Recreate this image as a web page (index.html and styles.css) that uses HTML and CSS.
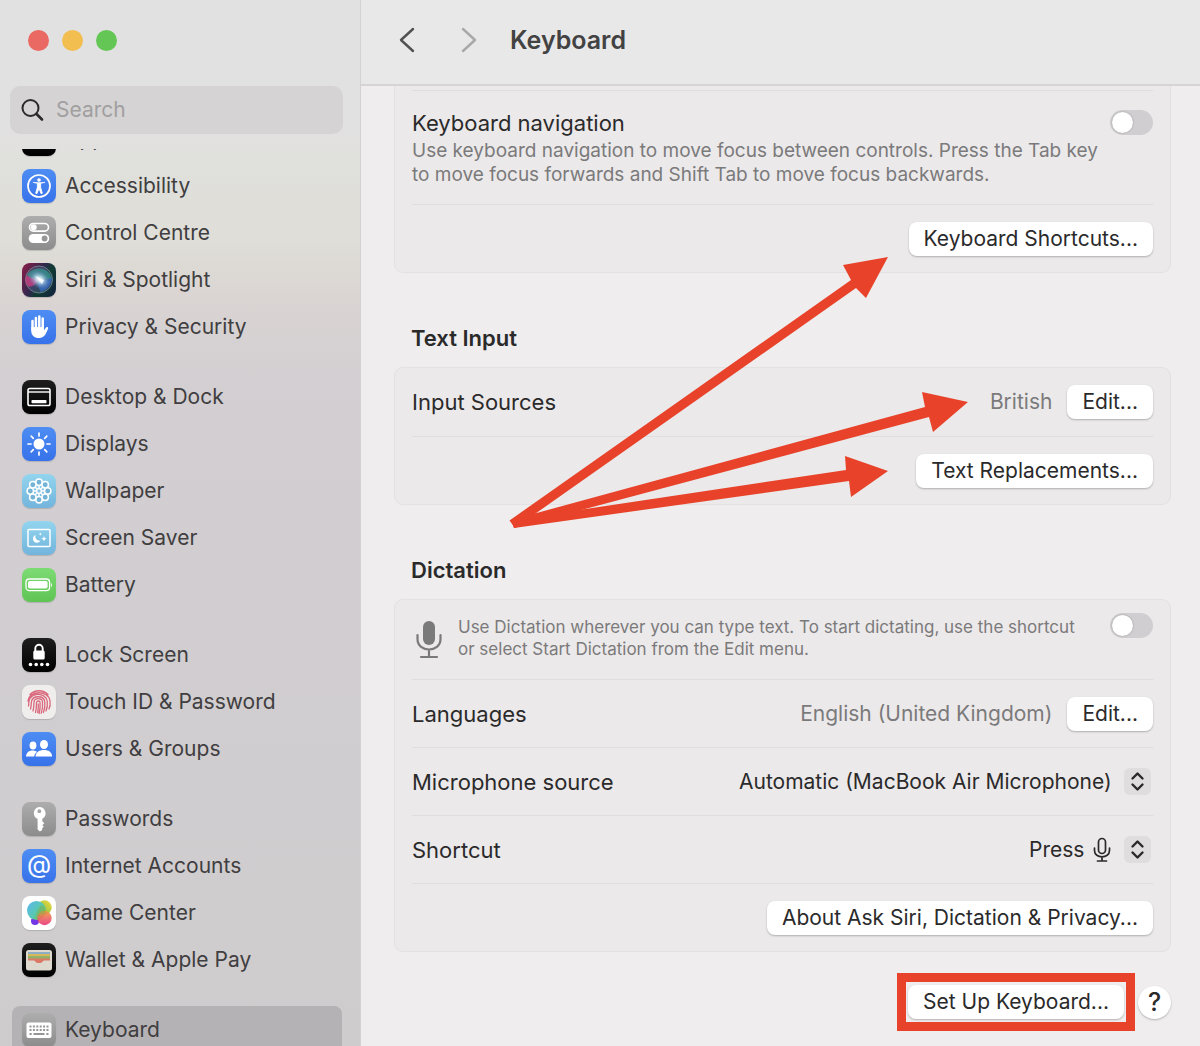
FILE: index.html
```html
<!DOCTYPE html>
<html lang="en">
<head>
    <meta charset="UTF-8">
    <meta name="viewport" content="width=device-width, initial-scale=1.0">
    <title>Keyboard</title>
    <link rel="stylesheet" href="styles.css">
</head>
<body>
<div class="window">

    <aside class="sidebar">
        <div class="lights">
            <button class="light red" aria-label="Close"></button>
            <button class="light yellow" aria-label="Minimise"></button>
            <button class="light green" aria-label="Zoom"></button>
        </div>

        <label class="search">
            <svg width="24" height="24" viewBox="0 0 24 24" fill="none" stroke="#2b2a2b" stroke-linecap="round"><circle cx="9.5" cy="10" r="8" stroke-width="2"/><path d="M15.500 16l5.500 5.500" stroke-width="2.6"/></svg>
            <input type="search" placeholder="Search" aria-label="Search">
        </label>

        <nav class="list">
            <div class="group">
                <a class="item" href="#"><span class="icon black"></span>Appearance</a>
                <a class="item" href="#"><span class="icon blue"><svg viewBox="0 0 34 34"><circle cx="17" cy="17" r="11" fill="none" stroke="#fff" stroke-width="1.7"/><circle cx="17" cy="11" r="1.8" fill="#fff"/><path d="M11 13.3l4.400 1v4l-1.700 6 1.200.4L17 19.500l2.100 5.200 1.200-.4-1.700-6v-4l4.400-1" fill="#fff" stroke="#fff" stroke-width=".9" stroke-linejoin="round"/></svg></span>Accessibility</a>
                <a class="item" href="#"><span class="icon grey"><svg viewBox="0 0 34 34"><rect x="7.5" y="7.500" width="19" height="7.6" rx="3.8" fill="none" stroke="#fff" stroke-width="1.6"/><circle cx="11.7" cy="11.300" r="3" fill="#fff"/><rect x="6.7" y="18" width="20.6" height="9" rx="4.5" fill="#fff"/><circle cx="22.6" cy="22.5" r="2.9" fill="#979697"/></svg></span>Control Centre</a>
                <a class="item" href="#"><span class="icon siri"><svg viewBox="0 0 34 34"><defs><radialGradient id="glow"><stop offset="0" stop-color="#fff"/><stop offset=".35" stop-color="#c5e3f2" stop-opacity=".8"/><stop offset="1" stop-color="#5a7ec0" stop-opacity="0"/></radialGradient></defs><circle cx="17" cy="16.5" r="13.5" fill="#4b5a83" fill-opacity=".5" stroke="#8aa89f" stroke-opacity=".6"/><path d="M5 12c5-8 17-9 23-1 4 9-5 4-11 5S9 17 5 12z" fill="#35a394" opacity=".65"/><path d="M5 12c2 3 7 3 12 4-3 6-8 9-11 7-3-3-3-8-1-11z" fill="#dc3d83" opacity=".7"/><path d="M17 16c5 1 10 1 13-2 0 7-4 13-11 15-3-4-3-8-2-13z" fill="#386ecb" opacity=".7"/><ellipse cx="17.5" cy="16.5" rx="12" ry="9" fill="url(#glow)" transform="rotate(30 17.5 16.5)"/><path d="M13 13l9 4-2 4z" fill="#fff" opacity=".85"/></svg></span>Siri &amp; Spotlight</a>
                <a class="item" href="#"><span class="icon blue"><svg viewBox="0 0 34 34"><g stroke="#fff" stroke-width="2.5" stroke-linecap="round"><path d="M10.500 11v9M13.900 8v11M17.300 6.500v12M20.700 8.500v11"/></g><path d="M9.300 17h12.700v3.200l2-2.600c.9-1.200 2.700-.6 2.100.9-1.600 3.800-3 9-8.100 9.500-5.500.4-8.700-2.500-8.700-7z" fill="#fff"/></svg></span>Privacy &amp; Security</a>
            </div>

            <div class="group">
                <a class="item" href="#"><span class="icon black"><svg viewBox="0 0 34 34"><rect x="6" y="8.5" width="22" height="17" rx="1.8" fill="none" stroke="#fff" stroke-width="1.6"/><path d="M6 12h22" stroke="#fff" stroke-width="1.4"/><rect x="9.5" y="20" width="15" height="3.2" rx=".7" fill="#fff"/></svg></span>Desktop &amp; Dock</a>
                <a class="item" href="#"><span class="icon blue"><svg viewBox="0 0 34 34"><circle cx="17" cy="17" r="5.5" fill="#fff"/><path d="M17 6v3M17 25v3M6 17h3M25 17h3M9.2 9.2l2.1 2.1M22.7 22.7l2.1 2.1M9.2 24.8l2.1-2.1M22.7 11.3l2.1-2.1" stroke="#fff" stroke-width="1.7" stroke-linecap="round"/></svg></span>Displays</a>
                <a class="item" href="#"><span class="icon sky"><svg viewBox="0 0 34 34"><g fill="#73b3d6" stroke="#fff" stroke-width="1.5"><circle cx="17" cy="8.3" r="3.2"/><circle cx="23.2" cy="10.8" r="3.2"/><circle cx="25.7" cy="17" r="3.2"/><circle cx="23.2" cy="23.2" r="3.2"/><circle cx="17" cy="25.7" r="3.2"/><circle cx="10.8" cy="23.2" r="3.2"/><circle cx="8.3" cy="17" r="3.2"/><circle cx="10.8" cy="10.8" r="3.2"/><path d="M17 11v12M11 17h12M12.8 12.8l8.4 8.4M21.2 12.8l-8.4 8.4"/></g><circle cx="17" cy="17" r="2.3" fill="#8fc4e2" stroke="#fff" stroke-width="1.2"/></svg></span>Wallpaper</a>
                <a class="item" href="#"><span class="icon sky"><svg viewBox="0 0 34 34"><rect x="6" y="8.5" width="22" height="17" rx="1" fill="none" stroke="#fff" stroke-width="1.5"/><path d="M13.500 14a4 4 0 1 0 5 5.500 4.200 4.200 0 0 1-5-5.500z" fill="#fff"/><path d="M22 15l.8 1.900 1.900.8-1.900.8-.8 1.900-.8-1.900-1.900-.8 1.900-.8zM18.300 11.500l.5 1.100 1.100.5-1.100.5-.5 1.100-.5-1.100-1.100-.5 1.100-.5z" fill="#fff"/></svg></span>Screen Saver</a>
                <a class="item" href="#"><span class="icon lime"><svg viewBox="0 0 34 34"><rect x="4" y="11" width="23.6" height="11.6" rx="3.4" fill="none" stroke="#fff" stroke-width="1.3"/><rect x="6" y="13" width="19.6" height="7.6" rx="1.8" fill="#fff"/><path d="M29.2 15v4c1.2-.5 1.2-3.5 0-4z" fill="#fff"/></svg></span>Battery</a>
            </div>

            <div class="group">
                <a class="item" href="#"><span class="icon black"><svg viewBox="0 0 34 34"><path d="M13.300 13v-2.500a3.700 3.700 0 0 1 7.400 0V13" fill="none" stroke="#fff" stroke-width="1.9"/><rect x="11.300" y="12.500" width="11.400" height="9" rx="1.500" fill="#fff"/><g fill="#fff"><circle cx="8.500" cy="26.500" r="1.800"/><circle cx="14.200" cy="26.500" r="1.800"/><circle cx="19.800" cy="26.500" r="1.800"/><circle cx="25.500" cy="26.500" r="1.800"/></g></svg></span>Lock Screen</a>
                <a class="item" href="#"><span class="icon white"><svg viewBox="0 0 34 34" fill="none" stroke="#d9667b" stroke-width="1.300" stroke-linecap="round"><path d="M8 9.500c5-5 13-5 18 0M6 16c1.500-11 20.500-11 22 0 .4 3 0 6-1 8M6.500 21c.3-1 .2-3 .4-4.500 1-9.500 17.200-9.500 18.400 0 .4 4-.3 7-1.300 9.500M8.500 24c.8-2.500.6-4.500.9-7 .8-7 12.600-7 13.400 0 .4 4-.2 7.500-1.400 10.500M11 26c1-3 .7-6 1-9 .5-4.500 8-4.500 8.500 0 .3 4 0 8-1.300 11.300M13.500 27.500c1.100-3.500.8-7 1-10 .3-2 3.400-2 3.600 0 .2 4 0 7.500-1 11M16.300 19c0 3.500 0 6-.7 8.500"/></svg></span>Touch ID &amp; Password</a>
                <a class="item" href="#"><span class="icon blue"><svg viewBox="0 0 34 34" fill="#fff"><ellipse cx="11" cy="13.500" rx="3.400" ry="4"/><path d="M4 24.500c.4-4 3-6 6.500-6 2 0 3.500.5 4.500 1.500-1.500 1-2.500 2.500-2.800 4.500z"/><ellipse cx="22" cy="12.500" rx="4" ry="4.500"/><path d="M13.500 24.500c.4-4.500 3.900-6.500 8.500-6.500s7.700 2 8.200 6.500z"/></svg></span>Users &amp; Groups</a>
            </div>

            <div class="group">
                <a class="item" href="#"><span class="icon grey"><svg viewBox="0 0 34 34"><path fill="#fff" fill-rule="evenodd" d="M17.300 5a6.300 6.300 0 0 1 3 11.800v2.400l2 2-2 2 1.500 1.600-1.600 1.500V28l-2.300 1.500-2.300-2v-10.500A6.300 6.300 0 0 1 17.300 5zm0 2.300a1.900 1.900 0 1 0 .01 0z"/></svg></span>Passwords</a>
                <a class="item" href="#"><span class="icon blue at">@</span>Internet Accounts</a>
                <a class="item" href="#"><span class="icon bright"><svg viewBox="0 0 34 34"><defs><linearGradient id="gc1" x1="0" y1="0" x2="1" y2=".7"><stop offset="0" stop-color="#58b7f3"/><stop offset=".6" stop-color="#59c8b1"/><stop offset="1" stop-color="#7bc344"/></linearGradient><linearGradient id="gc2" x1="0" y1="1" x2="1" y2="0"><stop offset="0" stop-color="#68bd50"/><stop offset="1" stop-color="#f9d939"/></linearGradient><linearGradient id="gc3" x1="0" y1="0" x2="0" y2="1"><stop offset="0" stop-color="#f19a3c"/><stop offset="1" stop-color="#e9347e"/></linearGradient></defs><circle cx="22.500" cy="11.500" r="7.200" fill="url(#gc2)"/><circle cx="13" cy="25" r="4" fill="#7437e6"/><circle cx="14.500" cy="14.500" r="9.500" fill="url(#gc1)"/><circle cx="22.500" cy="22" r="7.200" fill="url(#gc3)" opacity=".9"/><path d="M14 23.500c1-4 5-6 9-5 1-5-1-8-4-9-3 3-6 9-5 14z" fill="#7fae4b" opacity=".5"/></svg></span>Game Center</a>
                <a class="item" href="#"><span class="icon black"><svg viewBox="0 0 34 34"><rect x="4" y="7" width="26" height="20.500" rx="2.500" fill="#ddd9cf"/><rect x="6" y="9" width="22" height="3" fill="#8caec4"/><path d="M6 11h22v3H6z" fill="#d5b85c"/><path d="M6 13h22v3H6z" fill="#91b267"/><path d="M6 15.500h22V18h-6c-1 0-2 3-5 3s-4-3-5-3H6z" fill="#de7866"/><path d="M6 17.500h5.500c2 0 2 2.500 5.500 2.500s3.500-2.500 5.500-2.500H28V26H6z" fill="#ddd9cf"/><path d="M13 18h8c-1 1-2 2-4 2s-3-1-4-2z" fill="#de7866"/></svg></span>Wallet &amp; Apple Pay</a>
            </div>

            <div class="group">
                <a class="item selected" href="#" aria-current="page"><span class="icon grey"><svg viewBox="0 0 34 34"><rect x="4.500" y="9.500" width="25" height="15.500" rx="2" fill="#fff"/><path d="M7.500 13.500h19M7.500 17h19" stroke="#979697" stroke-width="1.900" stroke-dasharray="2 1.400"/><path d="M7.500 21h2.200M11.500 21h11M24.300 21h2.200" stroke="#979697" stroke-width="1.900"/></svg></span>Keyboard</a>
            </div>
        </nav>
    </aside>

    <main class="main">
        <header class="titlebar">
            <button class="arrow" aria-label="Back"><svg width="16" height="26" viewBox="0 0 16 26"><path d="M14 2L2 13l12 11" fill="none" stroke="#525152" stroke-width="2.400" stroke-linecap="round" stroke-linejoin="round"/></svg></button>
            <button class="arrow" aria-label="Forward"><svg width="16" height="26" viewBox="0 0 16 26"><path d="M2 2l12 11L2 24" fill="none" stroke="#a9a8a9" stroke-width="2.400" stroke-linecap="round" stroke-linejoin="round"/></svg></button>
            <h1>Keyboard</h1>
        </header>

        <div class="content">
            <section class="card card-cut">
                <div class="row row-top">
                    <div class="text">
                        <label for="navSwitch">Keyboard navigation</label>
                        <p>Use keyboard navigation to move focus between controls. Press the Tab key<br>to move focus forwards and Shift Tab to move focus backwards.</p>
                    </div>
                    <input type="checkbox" class="switch" id="navSwitch">
                </div>
                <div class="row"><button class="btn">Keyboard Shortcuts...</button></div>
            </section>

            <h2>Text Input</h2>
            <section class="card">
                <div class="row">
                    <span class="name">Input Sources</span>
                    <span class="value">British</span>
                    <button class="btn">Edit...</button>
                </div>
                <div class="row"><button class="btn">Text Replacements...</button></div>
            </section>

            <h2>Dictation</h2>
            <section class="card">
                <div class="row row-intro">
                    <svg class="mic" width="32" height="40" viewBox="0 0 32 40"><rect x="10" y="1" width="12" height="24" rx="6" fill="#7b7a7b"/><path d="M4.500 15v4c0 14 23 14 23 0v-4M16 30v7M8 37h16" fill="none" stroke="#7b7a7b" stroke-width="2.200" stroke-linecap="round"/></svg>
                    <label class="text small" for="dictSwitch">Use Dictation wherever you can type text. To start dictating, use the shortcut<br>or select Start Dictation from the Edit menu.</label>
                    <input type="checkbox" class="switch" id="dictSwitch">
                </div>
                <div class="row">
                    <span class="name">Languages</span>
                    <span class="value">English (United Kingdom)</span>
                    <button class="btn">Edit...</button>
                </div>
                <div class="row">
                    <label class="name" for="micSource">Microphone source</label>
                    <span class="popup">
                        <select id="micSource"><option>Automatic (MacBook Air Microphone)</option></select>
                        <svg class="stepper" width="27" height="27" viewBox="0 0 27 27"><path d="M8.500 10.500l5-5 5 5M8.500 16.500l5 5 5-5" fill="none" stroke="#2b2a2b" stroke-width="2.400" stroke-linecap="round" stroke-linejoin="round"/></svg>
                    </span>
                </div>
                <div class="row">
                    <label class="name" for="shortcut">Shortcut</label>
                    <span class="popup with-mic">
                        <select id="shortcut"><option>Press</option></select>
                        <svg class="key" width="18" height="26" viewBox="0 0 18 26" fill="none" stroke="#2b2a2b" stroke-width="1.700" stroke-linecap="round"><rect x="5.500" y="1.500" width="7" height="15" rx="3.500"/><path d="M1.500 11v2.500c0 8.500 15 8.500 15 0V11M9 20v4M4.500 24h9"/></svg>
                        <svg class="stepper" width="27" height="27" viewBox="0 0 27 27"><path d="M8.500 10.500l5-5 5 5M8.500 16.500l5 5 5-5" fill="none" stroke="#2b2a2b" stroke-width="2.400" stroke-linecap="round" stroke-linejoin="round"/></svg>
                    </span>
                </div>
                <div class="row"><button class="btn">About Ask Siri, Dictation &amp; Privacy...</button></div>
            </section>

            <footer class="footer">
                <div class="highlight"><button class="btn">Set Up Keyboard...</button></div>
                <button class="help" aria-label="Help">?</button>
            </footer>
        </div>

        <!-- red pointers to the buttons -->
        <svg class="pointers" width="470" height="290" viewBox="505 245 470 290" fill="#e8432a">
            <path d="M509.500 520.500L851 280l-8-15 45-8-22 41-10-10L515 528z"/>
            <path d="M511 520L925 407l-3-15 46 10-35 30-4-15L514 528z"/>
            <path d="M512 520L846 470l-1-14 43 15-37 26-2-16L514 528z"/>
        </svg>
    </main>
</div>
</body>
</html>
```
FILE: styles.css
```css
* {
    box-sizing: border-box;
}
body {
    margin: 0;
    font-family: Inter, "Liberation Sans", sans-serif;
    font-size: 22px;
    line-height: 30px;
    color: #2b2a2b;
}
button, input, select {
    font: inherit;
    color: inherit;
    border: 0;
    margin: 0;
    padding: 0;
}
.window {
    display: flex;
    height: 100vh;
    overflow: hidden;
}

/* sidebar */
.sidebar {
    flex: 0 0 30%;
    min-width: 0;
    display: flex;
    flex-direction: column;
    font-size: 21px;
    background: linear-gradient(#e2e1e1 0, #e2e1e1 130px, #e0e0dc 160px, #dfded8 240px, #dbd6d3 290px, #d5d0d2 350px, #d2ced1 420px, #cfccce 100%);
}
.lights {
    display: flex;
    gap: 13px;
    padding: 30px 28px 35px;
}
.light {
    width: 21px;
    height: 21px;
    border-radius: 50%;
}
.red { background: #ea6962; }
.yellow { background: #f2be4f; }
.green { background: #64c655; }
.search {
    display: flex;
    align-items: center;
    gap: 11px;
    height: 48px;
    margin: 0 17px 15px 10px;
    padding: 0 11px;
    border-radius: 10px;
    background: #d5d3d4;
}
.search svg {
    flex: none;
}
.search input {
    flex: 1;
    width: 100%;
    min-width: 0;
    background: none;
    outline: none;
    appearance: none;
}
.search input::placeholder {
    color: #a19fa0;
}
.list {
    flex: 1;
    min-height: 0;
    padding: 0 18px 0 12px;
    overflow: hidden;
}
.group {
    margin-bottom: 23px;
}
/* the list is scrolled a little under the search box */
.group:first-child {
    margin-top: -34px;
}
.item {
    display: flex;
    align-items: center;
    gap: 9px;
    height: 47px;
    padding-left: 10px;
    color: #403e40;
    text-decoration: none;
}
.selected {
    border-radius: 8px;
    background: #b5b2b5;
}
.icon {
    width: 34px;
    height: 34px;
    border-radius: 8px;
    box-shadow: 0 1px 1px rgba(0, 0, 0, 0.15);
}
.icon svg {
    display: block;
}
.blue { background: linear-gradient(#4e8df3, #3772ea); }
.grey { background: linear-gradient(#aeadae, #8d8c8d); }
.black { background: linear-gradient(#1f1e1f, #000); }
.sky { background: linear-gradient(#93d5ee, #72b4dc); }
.lime { background: linear-gradient(#7ddb74, #5fc454); }
.white { background: #f0eeed; }
.bright { background: #fff; }
.siri { background: linear-gradient(120deg, #8e1d49, #30284e 45%, #103c34 60%, #13203f); }
.at {
    color: #fff;
    font-size: 25px;
    text-align: center;
}

/* right side */
.main {
    position: relative;
    flex: 1;
    min-width: 0;
    border-left: 1px solid #d3d1d2;
    background: #efedee;
}
.titlebar {
    display: flex;
    align-items: center;
    height: 86px;
    padding: 0 38px 4px;
    border-bottom: 2px solid #d6d4d5;
    background: #e9e8e8;
}
.arrow {
    display: flex;
    margin-right: 46px;
    background: none;
}
.arrow + h1 {
    margin-left: -13px;
}
h1 {
    margin: 0;
    font-size: 25px;
    font-weight: 600;
    color: #434243;
}
.content {
    padding: 0 29px 0 33px;
}
h2 {
    margin: 50px 17px 14px;
    font-size: 22px;
    line-height: 30px;
    font-weight: 600;
}
.card {
    padding: 0 17px;
    border: 1px solid #e3e1e2;
    border-radius: 9px;
    background: #ebe9ea;
}
.card-cut {
    padding-top: 4px;
    border-top: 0;
    border-radius: 0 0 9px 9px;
}
.row {
    display: flex;
    align-items: center;
    justify-content: flex-end;
    min-height: 68px;
}
.row + .row, .card-cut .row {
    border-top: 1px solid #dfdddf;
}
.row-top {
    align-items: flex-start;
    padding: 17px 0;
}
.row-top .switch {
    margin-top: 2px;
}
.row-intro {
    align-items: flex-start;
    min-height: 79px;
    padding-top: 13px;
}
.name, .text {
    flex: 1;
}
.text label {
    display: block;
}
.text p {
    margin: 1px 0 0;
    font-size: 19px;
    line-height: 24px;
    color: #7b7a7b;
}
.small {
    margin-top: 3px;
    font-size: 17px;
    line-height: 22px;
    color: #7b7a7b;
}
.mic {
    margin: 7px 13px 0 1px;
}
.value, .btn, .popup {
    font-size: 21px;
}
.value {
    margin-right: 15px;
    color: #7b7a7b;
}
.btn {
    height: 34px;
    padding: 0 15px;
    border-radius: 8px;
    background: #fff;
    line-height: 32px;
    box-shadow: 0 1px 2px rgba(0, 0, 0, 0.25);
}
.switch {
    appearance: none;
    width: 43px;
    height: 25px;
    padding: 2px;
    border-radius: 13px;
    background: #d0ced0;
}
.switch::before {
    content: "";
    display: block;
    width: 21px;
    height: 21px;
    border-radius: 50%;
    background: #fff;
    box-shadow: 0 0 2px rgba(0, 0, 0, 0.3);
}
.switch:checked::before {
    margin-left: auto;
}
.popup {
    position: relative;
    display: flex;
    align-items: center;
}
.popup select {
    appearance: none;
    height: 30px;
    padding-right: 41px;
    background: none;
}
.with-mic select {
    padding-right: 68px;
}
.stepper {
    position: absolute;
    right: 2px;
    border-radius: 6px;
    background: #dfddde;
    pointer-events: none;
}
.key {
    position: absolute;
    right: 42px;
    pointer-events: none;
}
.footer {
    display: flex;
    align-items: center;
    justify-content: flex-end;
    gap: 3px;
    margin-top: 21px;
}
.highlight {
    display: flex;
    padding: 3px 2px;
    border: 9px solid #e8432a;
}
.help {
    width: 33px;
    height: 33px;
    border-radius: 50%;
    background: #fff;
    font-size: 25px;
    font-weight: 500;
    box-shadow: 0 1px 2px rgba(0, 0, 0, 0.25);
}
.pointers {
    position: absolute;
    top: 245px;
    right: 225px;
    pointer-events: none;
}
```
